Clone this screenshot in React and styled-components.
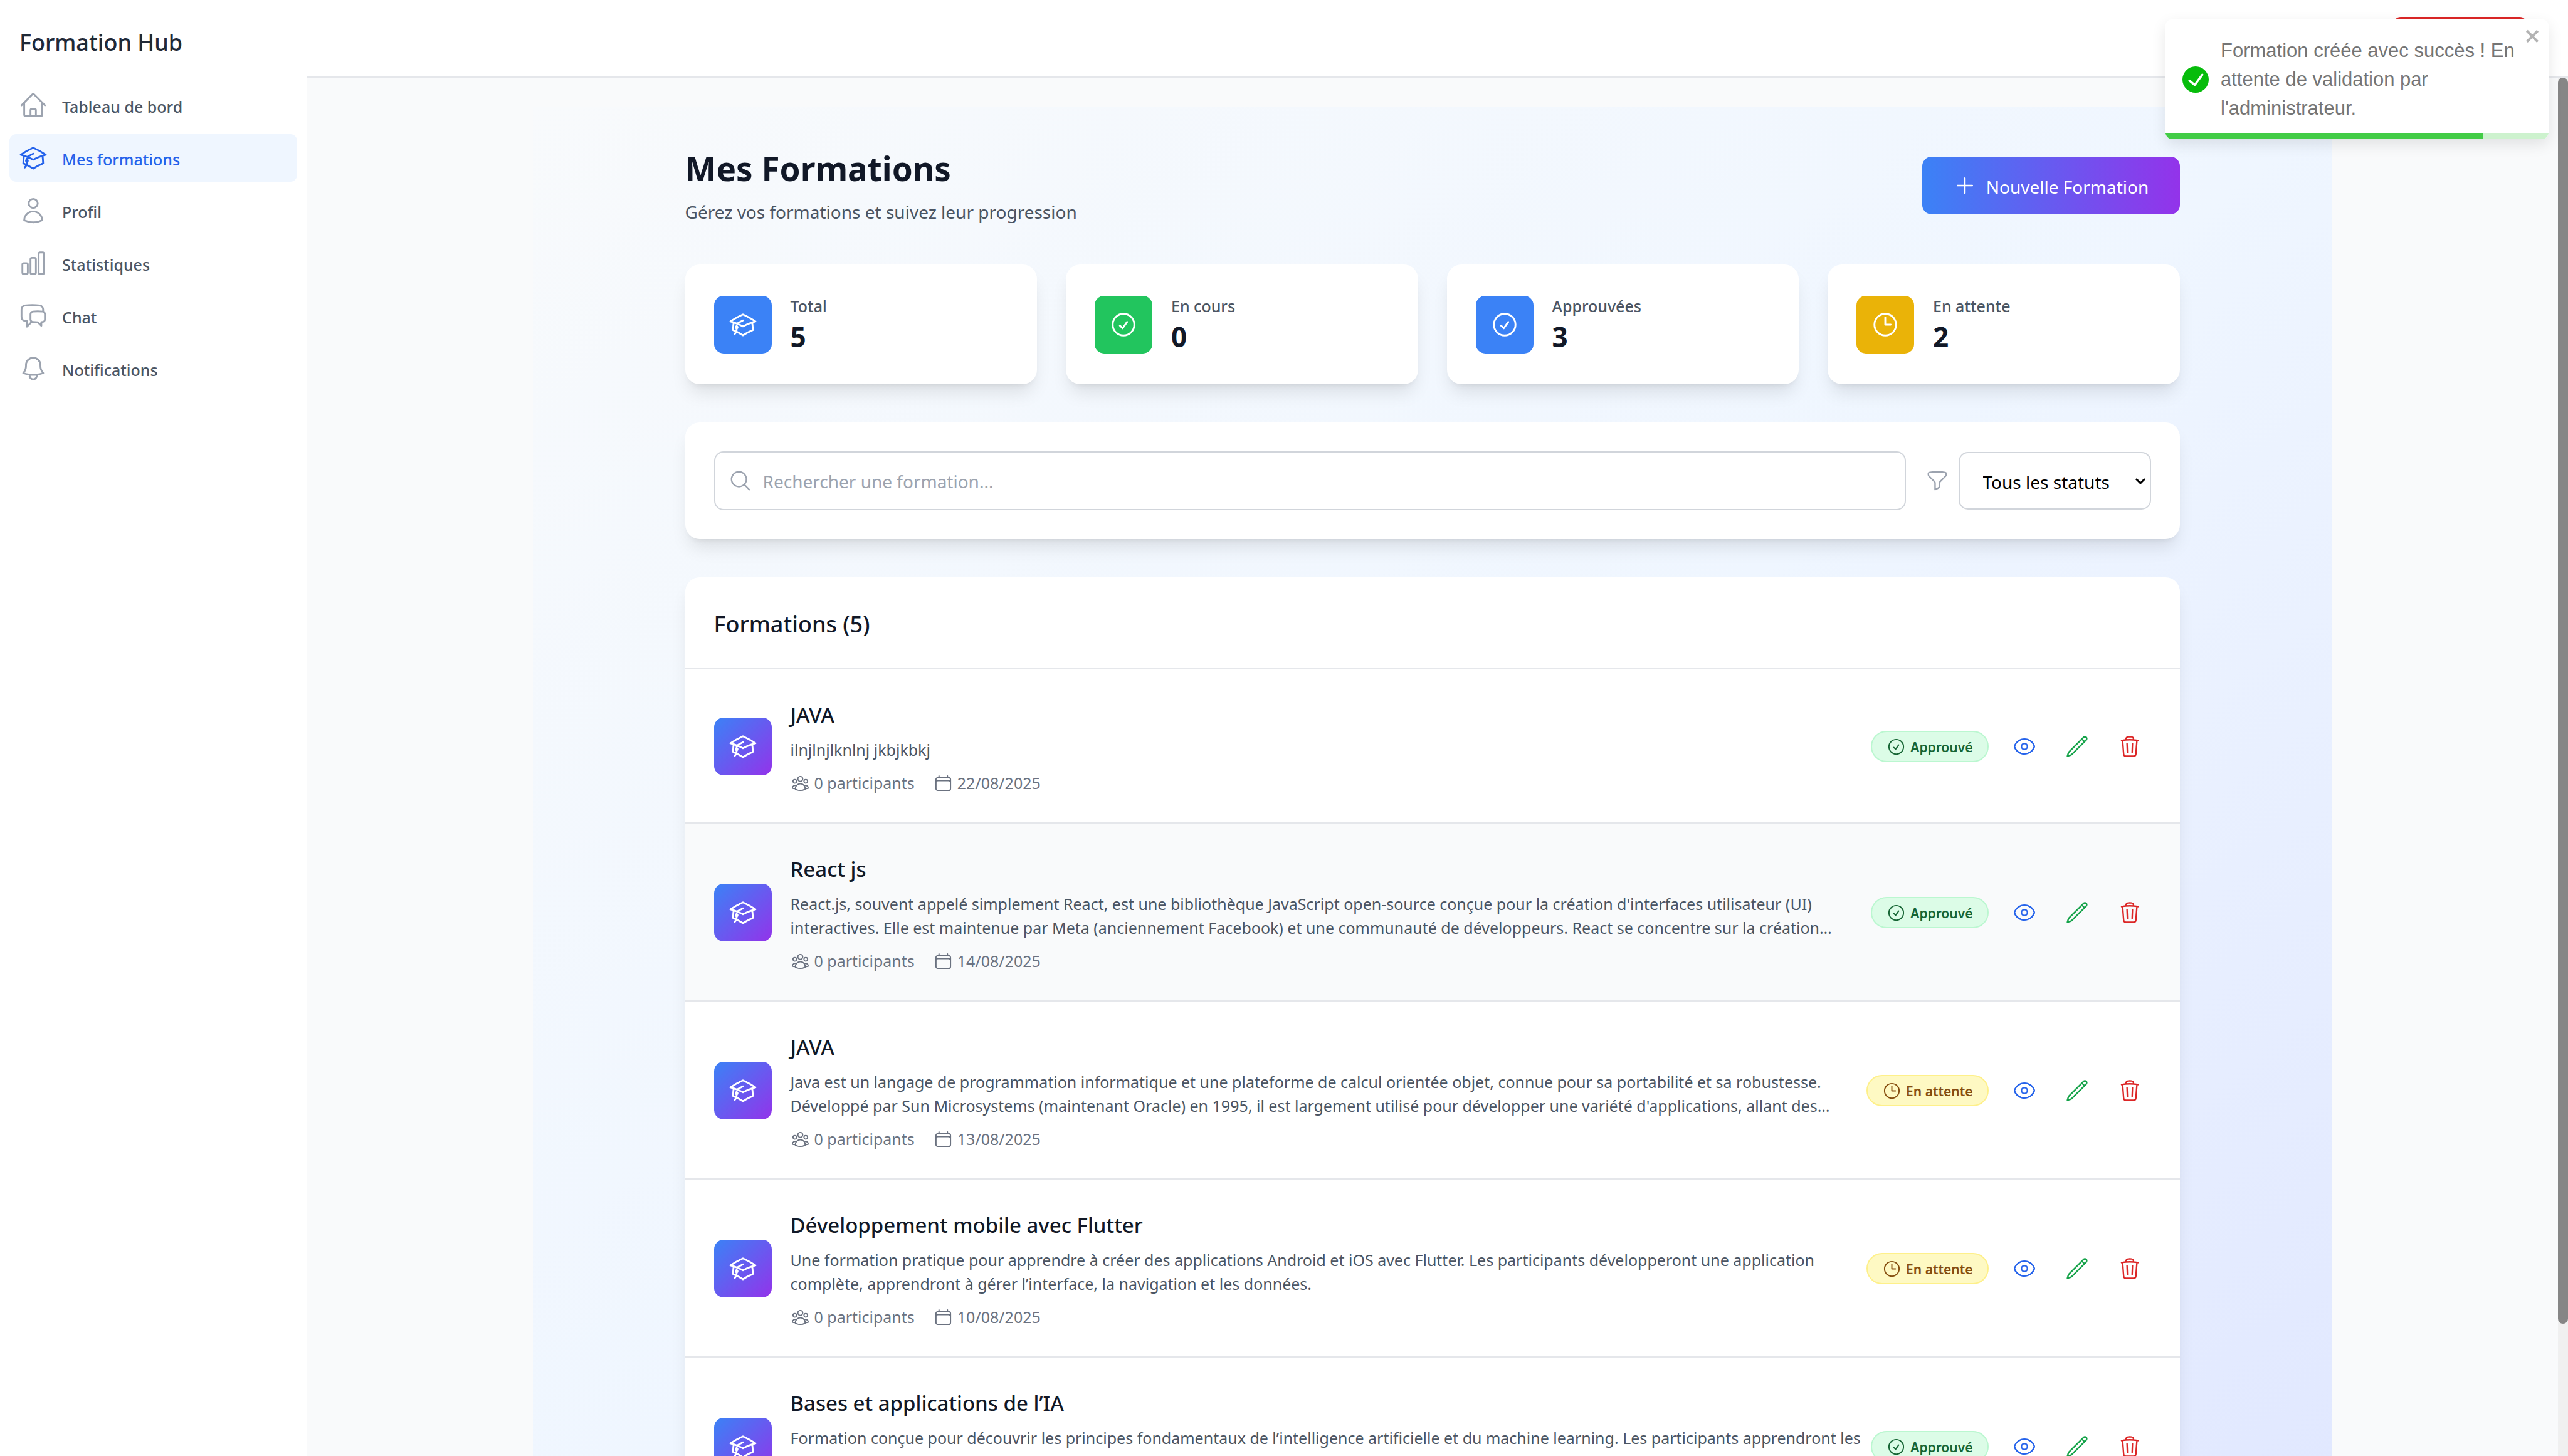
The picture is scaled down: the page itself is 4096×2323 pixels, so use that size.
import React from "react";
import styled, { createGlobalStyle, css } from "styled-components";
import {
  HiOutlineAcademicCap,
  HiOutlineBell,
  HiOutlineCalendar,
  HiOutlineChartBar,
  HiOutlineChatBubbleLeftRight,
  HiOutlineCheckCircle,
  HiOutlineClock,
  HiOutlineEye,
  HiOutlineFunnel,
  HiOutlineHome,
  HiOutlineMagnifyingGlass,
  HiOutlinePencil,
  HiOutlinePlus,
  HiOutlineTrash,
  HiOutlineUser,
  HiOutlineUserGroup,
} from "react-icons/hi2";

const GlobalStyle = createGlobalStyle`
  *, *::before, *::after { box-sizing: border-box; }
  body {
    margin: 0;
    background: #f9fafb;
    color: #111827;
    font-family: "Noto Sans", "Open Sans", sans-serif;
  }
  h1, h2, h3, p, ul { margin: 0; padding: 0; }
  ul { list-style: none; }
  button, input, select { font-family: inherit; }
  svg { display: block; flex: none; }
`;

/* ---------- Shell ---------- */

const Shell = styled.div`
  display: flex;
  height: 100vh;
  overflow: hidden;
`;

const Sidebar = styled.aside`
  flex: 0 0 489px;
  background: #ffffff;
`;

const Brand = styled.p`
  padding: 41px 31px 36px;
  font-size: 36px;
  font-weight: 500;
  line-height: 53px;
  color: #1f2937;
`;

const NavList = styled.ul`
  display: flex;
  flex-direction: column;
  gap: 8px;
  padding: 0 15px;
`;

const NavLink = styled.a`
  display: flex;
  align-items: center;
  gap: 23px;
  height: 76px;
  padding: 0 15px;
  border-radius: 11px;
  font-size: 25px;
  font-weight: 500;
  text-decoration: none;
  color: ${(p) => (p.$active ? "#2563eb" : "#4b5563")};
  background: ${(p) => (p.$active ? "#eff6ff" : "transparent")};

  svg {
    width: 46px;
    height: 46px;
    color: ${(p) => (p.$active ? "#2563eb" : "#9ca3af")};
  }

  span {
    padding-top: 4px;
  }
`;

const Column = styled.div`
  flex: 1;
  min-width: 0;
  display: flex;
  flex-direction: column;
`;

const TopBar = styled.header`
  flex: none;
  display: flex;
  align-items: center;
  justify-content: flex-end;
  height: 124px;
  padding: 0 66px;
  background: #ffffff;
  border-bottom: 2px solid #e5e7eb;
`;

const LogoutButton = styled.button`
  width: 212px;
  height: 68px;
  border: 0;
  border-radius: 11px;
  background: #dc2626;
`;

const ScrollArea = styled.div`
  flex: 1;
  min-height: 0;
  display: flex;
`;

const Main = styled.main`
  flex: 1;
  min-width: 0;
  overflow: hidden;
  padding: 46px 10%;
`;

const ScrollTrack = styled.div`
  flex: 0 0 16px;
  background: #f0f0f0;
`;

const ScrollThumb = styled.div`
  height: 90.4%;
  border-radius: 8px;
  background: #868686;
`;

/* ---------- Page ---------- */

const Page = styled.div`
  padding: 61px 31px;
  background: linear-gradient(to bottom right, #f8fafc, #eff6ff, #e0e7ff);
`;

const Inner = styled.div`
  max-width: 2384px;
  margin: 0 auto;
  display: flex;
  flex-direction: column;
  gap: 61px;
`;

const PageHeader = styled.div`
  display: flex;
  align-items: center;
  justify-content: space-between;
`;

const PageTitle = styled.h1`
  font-size: 53px;
  font-weight: 700;
  line-height: 75px;
`;

const PageSubtitle = styled.p`
  margin-top: 9px;
  font-size: 28px;
  line-height: 46px;
  color: #4b5563;
`;

const CreateButton = styled.button`
  display: flex;
  align-items: center;
  justify-content: center;
  gap: 15px;
  min-width: 411px;
  height: 92px;
  padding: 0 46px;
  border: 0;
  border-radius: 15px;
  background: linear-gradient(to right, #3b82f6, #9333ea);
  color: #ffffff;
  font-size: 28px;

  svg {
    width: 38px;
    height: 38px;
  }

  span {
    padding-top: 4px;
  }
`;

const Card = styled.section`
  background: #ffffff;
  border-radius: 23px;
  box-shadow: 0 19px 29px -6px rgba(0, 0, 0, 0.1),
    0 8px 11px -8px rgba(0, 0, 0, 0.1);
`;

const StatGrid = styled.div`
  display: grid;
  grid-template-columns: repeat(4, 1fr);
  gap: 46px;
`;

const StatCard = styled(Card)`
  display: flex;
  align-items: center;
  gap: 30px;
  padding: 46px;
`;

const IconTile = styled.div`
  flex: none;
  display: flex;
  align-items: center;
  justify-content: center;
  width: 92px;
  height: 92px;
  border-radius: 15px;
  background: ${(p) => p.$fill};
  color: #ffffff;

  svg {
    width: 46px;
    height: 46px;
  }
`;

const StatLabel = styled.p`
  font-size: 25px;
  font-weight: 500;
  line-height: 40px;
  color: #4b5563;
`;

const StatValue = styled.p`
  font-size: 44px;
  font-weight: 700;
  line-height: 59px;
`;

/* ---------- Filters ---------- */

const FilterCard = styled(Card)`
  display: flex;
  align-items: center;
  gap: 31px;
  padding: 46px;
`;

const SearchBox = styled.label`
  position: relative;
  flex: 1;
  display: block;

  svg {
    position: absolute;
    left: 23px;
    top: 28px;
    width: 38px;
    height: 38px;
    color: #9ca3af;
  }
`;

const SearchInput = styled.input`
  display: block;
  width: 100%;
  height: 94px;
  padding: 2px 31px 0 76px;
  border: 2px solid #d1d5db;
  border-radius: 15px;
  background: #ffffff;
  font-size: 28px;
  outline: none;

  &::placeholder {
    color: #9ca3af;
    opacity: 1;
  }
`;

const StatusFilter = styled.label`
  position: relative;
  display: flex;
  align-items: center;
  gap: 15px;
  color: #9ca3af;
`;

const FunnelIcon = styled(HiOutlineFunnel)`
  width: 38px;
  height: 38px;
`;

const StatusSelect = styled.select`
  appearance: none;
  width: 307px;
  height: 92px;
  padding: 4px 46px 0 37px;
  border: 2px solid #d1d5db;
  border-radius: 15px;
  background: #ffffff;
  color: #000000;
  font-size: 28px;
`;

const Chevron = styled.svg`
  position: absolute;
  right: 8px;
  top: 38px;
  width: 18px;
  height: 18px;
  pointer-events: none;
  color: #000000;
`;

/* ---------- List ---------- */

const ListHeader = styled.div`
  padding: 48px 46px 44px;
  border-bottom: 2px solid #e5e7eb;
`;

const ListTitle = styled.h2`
  font-size: 36px;
  font-weight: 500;
  line-height: 53px;
`;

const Row = styled.li`
  display: flex;
  align-items: center;
  padding: 46px 46px 44px;
  background: ${(p) => (p.$hovered ? "#f9fafb" : "transparent")};

  & + & {
    border-top: 2px solid #e5e7eb;
  }
`;

const RowText = styled.div`
  flex: 1;
  min-width: 0;
  padding-left: 30px;
  ${(p) =>
    p.$tall &&
    css`
      min-height: 192px;
    `}
`;

const RowTitle = styled.h3`
  font-size: 33px;
  font-weight: 500;
  line-height: 53px;
`;

const Description = styled.p`
  margin-top: 10px;
  font-size: 25px;
  line-height: 38px;
  color: #4b5563;
`;

const DescriptionLine = styled.span`
  display: block;
  white-space: nowrap;
`;

const Meta = styled.div`
  display: flex;
  gap: 30px;
  margin-top: 15px;
  font-size: 25px;
  line-height: 38px;
  color: #6b7280;
`;

const MetaItem = styled.span`
  display: flex;
  align-items: center;
  gap: 7px;

  svg {
    width: 31px;
    height: 31px;
  }
`;

const badgeTones = {
  approved: css`
    background: #dcfce7;
    border-color: #bbf7d0;
    color: #166534;
  `,
  pending: css`
    background: #fef9c3;
    border-color: #fef08a;
    color: #854d0e;
  `,
};

const Badge = styled.span`
  flex: none;
  display: flex;
  align-items: center;
  gap: 7px;
  height: 50px;
  padding: 0 23px;
  border: 2px solid;
  border-radius: 25px;
  font-size: 21px;
  font-weight: 600;
  ${(p) => badgeTones[p.$tone]}

  svg {
    width: 31px;
    height: 31px;
  }

  span {
    padding-top: 2px;
  }
`;

const Actions = styled.div`
  flex: none;
  display: flex;
  gap: 16px;
  margin-left: 23px;
`;

const ActionButton = styled.button`
  display: block;
  padding: 15px;
  border: 0;
  border-radius: 15px;
  background: transparent;
  color: ${(p) => p.$color};

  svg {
    width: 38px;
    height: 38px;
  }
`;

/* ---------- Toast ---------- */

const ToastShell = styled.div`
  position: fixed;
  top: 31px;
  right: 31px;
  width: 611px;
  border-radius: 11px;
  box-shadow: 0 8px 23px rgba(0, 0, 0, 0.1);
`;

const Toast = styled.div`
  position: relative;
  display: flex;
  align-items: center;
  gap: 19px;
  height: 191px;
  padding: 0 27px;
  border-radius: 11px;
  overflow: hidden;
  background: #ffffff;
  color: #757575;
  font-family: "Liberation Sans", Arial, sans-serif;
  font-size: 31px;
  line-height: 46px;
`;

const ToastIcon = styled.svg`
  width: 42px;
  height: 42px;
  fill: #07bc0c;
`;

const ToastClose = styled.button`
  position: absolute;
  top: 11px;
  right: 11px;
  padding: 0;
  border: 0;
  background: transparent;

  svg {
    width: 27px;
    height: 31px;
    fill: #b3b3b3;
  }
`;

const ToastTrack = styled.div`
  position: absolute;
  left: 0;
  right: 0;
  bottom: 0;
  height: 10px;
  background: #cdf2ce;
`;

const ToastProgress = styled.div`
  height: 100%;
  background: #42cc46;
`;

/* ---------- Data ---------- */

const navItems = [
  { label: "Tableau de bord", icon: HiOutlineHome },
  { label: "Mes formations", icon: HiOutlineAcademicCap, active: true },
  { label: "Profil", icon: HiOutlineUser },
  { label: "Statistiques", icon: HiOutlineChartBar },
  { label: "Chat", icon: HiOutlineChatBubbleLeftRight },
  { label: "Notifications", icon: HiOutlineBell },
];

const stats = [
  { label: "Total", value: 5, icon: HiOutlineAcademicCap, fill: "#3b82f6" },
  { label: "En cours", value: 0, icon: HiOutlineCheckCircle, fill: "#22c55e" },
  { label: "Approuvées", value: 3, icon: HiOutlineCheckCircle, fill: "#3b82f6" },
  { label: "En attente", value: 2, icon: HiOutlineClock, fill: "#eab308" },
];

const statuses = {
  approved: { label: "Approuvé", icon: HiOutlineCheckCircle },
  pending: { label: "En attente", icon: HiOutlineClock },
};

const courses = [
  {
    title: "JAVA",
    lines: ["ilnjlnjlknlnj jkbjkbkj"],
    date: "22/08/2025",
    status: "approved",
  },
  {
    title: "React js",
    lines: [
      "React.js, souvent appelé simplement React, est une bibliothèque JavaScript open-source conçue pour la création d'interfaces utilisateur (UI)",
      "interactives. Elle est maintenue par Meta (anciennement Facebook) et une communauté de développeurs. React se concentre sur la création…",
    ],
    date: "14/08/2025",
    status: "approved",
    hovered: true,
  },
  {
    title: "JAVA",
    lines: [
      "Java est un langage de programmation informatique et une plateforme de calcul orientée objet, connue pour sa portabilité et sa robustesse.",
      "Développé par Sun Microsystems (maintenant Oracle) en 1995, il est largement utilisé pour développer une variété d'applications, allant des…",
    ],
    date: "13/08/2025",
    status: "pending",
  },
  {
    title: "Développement mobile avec Flutter",
    lines: [
      "Une formation pratique pour apprendre à créer des applications Android et iOS avec Flutter. Les participants développeront une application",
      "complète, apprendront à gérer l’interface, la navigation et les données.",
    ],
    date: "10/08/2025",
    status: "pending",
  },
  {
    title: "Bases et applications de l’IA",
    lines: [
      "Formation conçue pour découvrir les principes fondamentaux de l’intelligence artificielle et du machine learning. Les participants apprendront les",
    ],
    status: "approved",
    tall: true,
  },
];

/* ---------- Components ---------- */

function CourseRow({ course }) {
  const status = statuses[course.status];
  const StatusIcon = status.icon;
  return (
    <Row $hovered={course.hovered}>
      <IconTile $fill="linear-gradient(to bottom right, #3b82f6, #9333ea)">
        <HiOutlineAcademicCap />
      </IconTile>
      <RowText $tall={course.tall}>
        <RowTitle>{course.title}</RowTitle>
        <Description>
          {course.lines.map((line) => (
            <DescriptionLine key={line}>{line}</DescriptionLine>
          ))}
        </Description>
        {course.date && (
          <Meta>
            <MetaItem>
              <HiOutlineUserGroup />0 participants
            </MetaItem>
            <MetaItem>
              <HiOutlineCalendar />
              {course.date}
            </MetaItem>
          </Meta>
        )}
      </RowText>
      <Badge $tone={course.status}>
        <StatusIcon />
        <span>{status.label}</span>
      </Badge>
      <Actions>
        <ActionButton type="button" $color="#2563eb" aria-label="Voir">
          <HiOutlineEye />
        </ActionButton>
        <ActionButton type="button" $color="#16a34a" aria-label="Modifier">
          <HiOutlinePencil />
        </ActionButton>
        <ActionButton type="button" $color="#dc2626" aria-label="Supprimer">
          <HiOutlineTrash />
        </ActionButton>
      </Actions>
    </Row>
  );
}

function SuccessToast({ progress }) {
  return (
    <ToastShell>
      <Toast role="alert">
        <ToastIcon viewBox="0 0 24 24">
          <path d="M12 0a12 12 0 1012 12A12.014 12.014 0 0012 0zm6.927 8.2l-6.845 9.289a1.011 1.011 0 01-1.43.188l-4.888-3.908a1 1 0 111.25-1.562l4.076 3.261 6.227-8.451a1 1 0 111.61 1.183z" />
        </ToastIcon>
        <p>Formation créée avec succès ! En attente de validation par l'administrateur.</p>
        <ToastClose type="button" aria-label="Fermer">
          <svg viewBox="0 0 14 16">
            <path
              fillRule="evenodd"
              d="M7.71 8.23l3.75 3.75-1.48 1.48-3.75-3.75-3.75 3.75L1 11.98l3.75-3.75L1 4.48 2.48 3l3.75 3.75L9.98 3l1.48 1.48-3.75 3.75z"
            />
          </svg>
        </ToastClose>
        <ToastTrack>
          <ToastProgress style={{ width: `${progress}%` }} />
        </ToastTrack>
      </Toast>
    </ToastShell>
  );
}

export default function App() {
  return (
    <>
      <GlobalStyle />
      <Shell>
        <Sidebar>
          <Brand>Formation Hub</Brand>
          <nav>
            <NavList>
              {navItems.map(({ label, icon: Icon, active }) => (
                <li key={label}>
                  <NavLink href="#" $active={active}>
                    <Icon />
                    <span>{label}</span>
                  </NavLink>
                </li>
              ))}
            </NavList>
          </nav>
        </Sidebar>
        <Column>
          <TopBar>
            <LogoutButton type="button" aria-label="Déconnexion" />
          </TopBar>
          <ScrollArea>
            <Main>
              <Page>
                <Inner>
                  <PageHeader>
                    <div>
                      <PageTitle>Mes Formations</PageTitle>
                      <PageSubtitle>
                        Gérez vos formations et suivez leur progression
                      </PageSubtitle>
                    </div>
                    <CreateButton type="button">
                      <HiOutlinePlus />
                      <span>Nouvelle Formation</span>
                    </CreateButton>
                  </PageHeader>

                  <StatGrid>
                    {stats.map(({ label, value, icon: Icon, fill }) => (
                      <StatCard key={label}>
                        <IconTile $fill={fill}>
                          <Icon />
                        </IconTile>
                        <div>
                          <StatLabel>{label}</StatLabel>
                          <StatValue>{value}</StatValue>
                        </div>
                      </StatCard>
                    ))}
                  </StatGrid>

                  <FilterCard>
                    <SearchBox>
                      <HiOutlineMagnifyingGlass />
                      <SearchInput
                        type="text"
                        placeholder="Rechercher une formation..."
                      />
                    </SearchBox>
                    <StatusFilter>
                      <FunnelIcon />
                      <StatusSelect defaultValue="all">
                        <option value="all">Tous les statuts</option>
                      </StatusSelect>
                      <Chevron viewBox="0 0 18 18">
                        <path
                          d="M2 5l7 7 7-7"
                          fill="none"
                          stroke="currentColor"
                          strokeWidth="3"
                        />
                      </Chevron>
                    </StatusFilter>
                  </FilterCard>

                  <Card>
                    <ListHeader>
                      <ListTitle>Formations (5)</ListTitle>
                    </ListHeader>
                    <ul>
                      {courses.map((course, i) => (
                        <CourseRow key={i} course={course} />
                      ))}
                    </ul>
                  </Card>
                </Inner>
              </Page>
            </Main>
            <ScrollTrack aria-hidden="true">
              <ScrollThumb />
            </ScrollTrack>
          </ScrollArea>
        </Column>
      </Shell>
      <SuccessToast progress={83} />
    </>
  );
}
